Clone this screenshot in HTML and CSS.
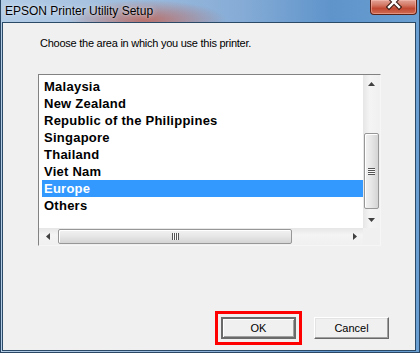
FILE: index.html
```html
<!DOCTYPE html>
<html lang="en">
<head>
    <meta charset="UTF-8">
    <title>EPSON Printer Utility Setup</title>
    <link rel="stylesheet" href="styles.css">
</head>
<body>
    <div class="window">
        <div class="titlebar">
            <span class="title">EPSON Printer Utility Setup</span>
            <div class="close-btn">
                <svg width="16" height="12" viewBox="0 0 16 12">
                    <path d="M3 -3 L13 7 M13 -3 L3 7" stroke="#3b1a14" stroke-width="4.5" stroke-linecap="square"/>
                    <path d="M3 -3 L13 7 M13 -3 L3 7" stroke="#ffffff" stroke-width="2.4" stroke-linecap="square"/>
                </svg>
            </div>
        </div>

        <div class="client">
            <p class="prompt">Choose the area in which you use this printer.</p>

            <div class="listbox">
                <ul class="items">
                    <li>Malaysia</li>
                    <li>New Zealand</li>
                    <li>Republic of the Philippines</li>
                    <li>Singapore</li>
                    <li>Thailand</li>
                    <li>Viet Nam</li>
                    <li class="selected">Europe</li>
                    <li>Others</li>
                </ul>

                <!-- vertical scrollbar -->
                <div class="vscroll">
                    <div class="sb-btn">
                        <svg width="7" height="4" viewBox="0 0 7 4"><polygon points="3.5,0 7,4 0,4" fill="#404040"/></svg>
                    </div>
                    <div class="sb-track">
                        <div class="vthumb">
                            <span class="grip-h"></span>
                        </div>
                    </div>
                    <div class="sb-btn">
                        <svg width="7" height="4" viewBox="0 0 7 4"><polygon points="0,0 7,0 3.5,4" fill="#404040"/></svg>
                    </div>
                </div>

                <!-- horizontal scrollbar -->
                <div class="hscroll">
                    <div class="sb-btn">
                        <svg width="4" height="7" viewBox="0 0 4 7"><polygon points="4,0 4,7 0,3.5" fill="#404040"/></svg>
                    </div>
                    <div class="sb-track">
                        <div class="hthumb">
                            <span class="grip-v"></span>
                        </div>
                    </div>
                    <div class="sb-btn">
                        <svg width="4" height="7" viewBox="0 0 4 7"><polygon points="0,0 4,3.5 0,7" fill="#404040"/></svg>
                    </div>
                </div>
                <div class="corner"></div>
            </div>

            <div class="actions">
                <div class="highlight">
                    <button class="btn btn-default">OK</button>
                </div>
                <button class="btn">Cancel</button>
            </div>
        </div>
    </div>
</body>
</html>
```

FILE: styles.css
```css
* {
    box-sizing: border-box;
}
body {
    margin: 0;
    font-family: "Liberation Sans", Arial, sans-serif;
    background: #ffffff;
}
.window {
    width: 420px;
    height: 353px;
    display: flex;
    flex-direction: column;
    padding: 0 3px 1px 1px;
    border: 1px solid #2a4865;
    border-top: none;
    background:
        radial-gradient(ellipse 80px 20px at 145px 20px, rgba(190, 100, 88, 0.85), rgba(190, 100, 88, 0) 100%),
        linear-gradient(to right, #b3cce6 0, #a6c2e0 90px, #86acd6 240px, #5f94cb 330px, #6a9fd2 420px);
}
.titlebar {
    height: 22px;
    flex: none;
    display: flex;
    justify-content: space-between;
    align-items: flex-start;
}
.title {
    font-size: 12px;
    line-height: 22px;
    padding-left: 3px;
    color: #000;
    text-shadow: 0 0 6px rgba(255, 255, 255, 0.6), 0 0 2px rgba(255, 255, 255, 0.5);
}
.close-btn {
    width: 47px;
    height: 15px;
    margin-right: -1px;
    display: flex;
    justify-content: center;
    border: 1px solid #5b2218;
    border-top: none;
    border-radius: 0 0 4px 4px;
    background: linear-gradient(to bottom, #e2a497 0, #d47a68 35%, #c24a34 60%, #cf6a50 100%);
    box-shadow: inset 0 0 0 1px rgba(255, 200, 190, 0.45);
}
.client {
    flex: 1;
    display: flex;
    flex-direction: column;
    padding: 13px 0 5px 35px;
    background: #f0f0f0;
    border: 1px solid #2b4a68;
}
.prompt {
    margin: 0 0 0 2px;
    font-size: 11px;
    line-height: 14px;
    letter-spacing: -0.25px;
    color: #000;
}
.listbox {
    margin-top: 24px;
    width: 343px;
    height: 172px;
    display: grid;
    grid-template-columns: 1fr 17px;
    grid-template-rows: 1fr 17px;
    background: #fff;
    border: 1px solid;
    border-color: #828282 #f6f6f6 #f6f6f6 #828282;
}
.items {
    list-style: none;
    margin: 0;
    padding: 3px 0 0 3px;
    overflow: hidden;
}
.items li {
    height: 17px;
    line-height: 17px;
    padding-left: 2px;
    font-size: 13px;
    font-weight: bold;
    letter-spacing: 0.25px;
    color: #000;
    white-space: nowrap;
}
.items li.selected {
    background: #3399ff;
    color: #fff;
}
.vscroll {
    display: flex;
    flex-direction: column;
    background: linear-gradient(to right, #e6e6e6, #f4f4f4 40%, #f0f0f0);
}
.hscroll {
    display: flex;
    background: linear-gradient(to bottom, #e6e6e6, #f4f4f4 40%, #f0f0f0);
}
.sb-btn {
    width: 17px;
    height: 17px;
    flex: none;
    display: flex;
    align-items: center;
    justify-content: center;
}
.sb-track {
    flex: 1;
    display: flex;
}
.vscroll .sb-track {
    flex-direction: column;
}
.vthumb {
    margin: 41px 0 0 1px;
    width: 15px;
    height: 76px;
    display: flex;
    align-items: center;
    justify-content: center;
    border: 1px solid #979797;
    border-radius: 2px;
    background: linear-gradient(to right, #f2f2f2, #e6e6e6 50%, #d4d4d4);
    box-shadow: inset 1px 1px 0 #fff;
}
.hthumb {
    margin: 1px 0 0 2px;
    width: 234px;
    height: 15px;
    display: flex;
    align-items: center;
    justify-content: center;
    border: 1px solid #979797;
    border-radius: 2px;
    background: linear-gradient(to bottom, #f2f2f2, #e6e6e6 50%, #d4d4d4);
    box-shadow: inset 1px 1px 0 #fff;
}
.grip-h {
    width: 7px;
    height: 7px;
    background: repeating-linear-gradient(to bottom, #555 0, #555 1px, #fafafa 1px, #fafafa 2px);
}
.grip-v {
    width: 7px;
    height: 7px;
    background: repeating-linear-gradient(to right, #555 0, #555 1px, #fafafa 1px, #fafafa 2px);
}
.corner {
    background: #f0f0f0;
}
.actions {
    margin-top: auto;
    display: flex;
    justify-content: flex-end;
    align-items: center;
    gap: 12px;
    padding-right: 26px;
}
.highlight {
    border: 3px solid #ff0000;
    padding: 3px;
}
.btn {
    width: 75px;
    height: 22px;
    padding: 0;
    font-family: "Liberation Sans", Arial, sans-serif;
    font-size: 11px;
    color: #000;
    background: #f0f0f0;
    border: 1px solid;
    border-color: #ffffff #696969 #696969 #ffffff;
    box-shadow: inset -1px -1px 0 #a0a0a0, inset 1px 1px 0 #e3e3e3;
    display: block;
}
.btn-default {
    border: 2px solid #6a6a6a;
    box-shadow: inset 1px 1px 0 #fff, inset -1px -1px 0 #a0a0a0;
}
```
